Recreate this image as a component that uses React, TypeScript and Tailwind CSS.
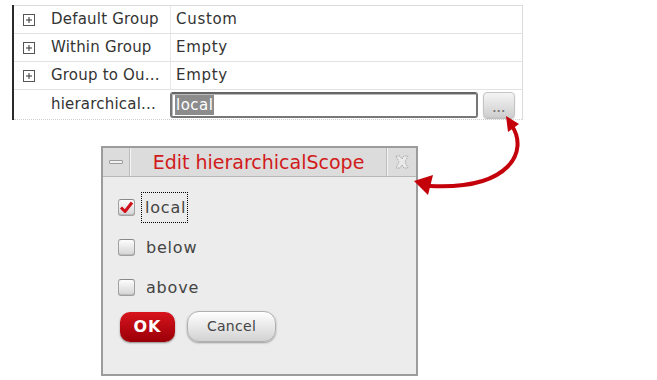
import React from "react";

const font = { fontFamily: '"DejaVu Sans", "Noto Sans", sans-serif' };

function PlusBox() {
  return (
    <svg width="12" height="12" viewBox="0 0 12 12" className="shrink-0">
      <rect x="0.5" y="0.5" width="11" height="11" fill="#fff" stroke="#555" />
      <path d="M3 6h6M6 3v6" stroke="#333" strokeWidth="1" />
    </svg>
  );
}

function Row({ label, value, plus = true }: { label: string; value: string; plus?: boolean }) {
  return (
    <div className="flex h-[28px] border-b border-[#e2e2e2]">
      <div className="flex w-[156px] items-center">
        <div className="flex w-[37px] justify-start pl-[9px]">{plus ? <PlusBox /> : null}</div>
        <span className="text-[15px] tracking-[0.2px] text-[#333]">{label}</span>
      </div>
      <div className="flex flex-1 items-center border-l border-[#e8e8e8]">
        <span className="pl-[5px] text-[15px] tracking-[0.7px] text-[#333]">{value}</span>
      </div>
    </div>
  );
}

function Checkbox({ checked }: { checked?: boolean }) {
  return (
    <div className="relative h-[17px] w-[17px] rounded-[3px] border border-[#a0a0a0] border-t-[#888] bg-gradient-to-b from-[#fdfdfd] to-[#d4d4d4] shadow-[inset_0_-1px_0_#bbb]">
      {checked ? (
        <svg width="17" height="17" viewBox="0 0 17 17" className="absolute left-[-1px] top-[-1px]">
          <path d="M3 8.5 L7 12.5 L14 3.5" fill="none" stroke="#d0101a" strokeWidth="3" strokeLinejoin="round" />
        </svg>
      ) : null}
    </div>
  );
}

export default function App() {
  return (
    <div className="relative h-[380px] w-[657px] overflow-hidden bg-white" style={font}>
      {/* property table */}
      <div className="ml-[12px] mt-[5px] w-[511px] border-l-2 border-[#2a2a2a]">
        <div className="border-t border-r border-[#dcdcdc]">
          <Row label="Default Group" value="Custom" />
          <Row label="Within Group" value="Empty" />
          <Row label="Group to Ou..." value="Empty" />
          <div className="flex h-[30px] border-b border-dotted border-[#cfcfcf]">
            <div className="flex w-[156px] items-center">
              <div className="w-[37px]" />
              <span className="text-[15px] tracking-[0.2px] text-[#333]">hierarchical...</span>
            </div>
            <div className="flex flex-1 items-center gap-[5px]">
              <div className="flex h-[26px] w-[308px] items-center rounded-[3px] border-2 border-[#777] border-t-[#666] bg-white pl-[3px] shadow-[inset_1px_1px_0_#bbb]">
                <span className="bg-[#8c8c8c] px-[1px] text-[15px] leading-[20px] tracking-[0.5px] text-white">local</span>
              </div>
              <div className="flex h-[26px] w-[32px] items-end justify-center rounded-[4px] border border-[#c4c4c4] bg-gradient-to-b from-[#f4f4f4] to-[#cfcfcf] pb-[3px] shadow-[0_1px_1px_#bbb]">
                <span className="text-[10px] font-bold leading-[10px] tracking-[0.5px] text-[#777]">...</span>
              </div>
            </div>
          </div>
        </div>
      </div>

      {/* dialog */}
      <div className="ml-[101px] mt-[26px] flex h-[230px] w-[317px] flex-col border-2 border-[#9c9c9c] bg-[#ececec]">
        <div className="flex h-[29px] border-b border-[#b8b8b8] bg-[#dcdcdc]">
          <div className="flex w-[27px] items-center justify-center border-r border-[#bcbcbc] shadow-[1px_0_0_#f4f4f4]">
            <div className="h-[4px] w-[14px] rounded-[1px] border border-[#9a9a9a] bg-[#f2f2f2]" />
          </div>
          <div className="flex flex-1 items-center justify-center text-[19px] text-[#d11a1a]">
            Edit hierarchicalScope
          </div>
          <div className="flex w-[29px] items-center justify-center border-l border-[#f4f4f4] shadow-[-1px_0_0_#bcbcbc]">
            <svg width="16" height="16" viewBox="0 0 16 16">
              <path d="M2 2 L6 2 L8 5 L10 2 L14 2 L11 8 L14 14 L10 14 L8 11 L6 14 L2 14 L5 8 Z" fill="#eaeaea" stroke="#a8a8a8" strokeWidth="1" strokeDasharray="1.5 1" />
            </svg>
          </div>
        </div>
        <div className="flex flex-1 flex-col pl-[15px]">
          <div className="mt-[15px] flex h-[31px] items-center">
            <Checkbox checked />
            <div className="ml-[6px] flex h-[31px] w-[47px] items-center border border-dotted border-black pl-[3px] text-[16px] tracking-[0.8px] text-[#444]">
              local
            </div>
          </div>
          <div className="mt-[9px] flex h-[31px] items-center">
            <Checkbox />
            <span className="ml-[11px] text-[16px] tracking-[0.8px] text-[#444]">below</span>
          </div>
          <div className="mt-[9px] flex h-[31px] items-center">
            <Checkbox />
            <span className="ml-[11px] text-[16px] tracking-[0.8px] text-[#444]">above</span>
          </div>
          <div className="ml-[2px] mt-[8px] flex items-center gap-[12px]">
            <div className="flex h-[30px] w-[55px] items-center justify-center rounded-[10px] bg-gradient-to-b from-[#d8141c] to-[#9a0008] shadow-[0_1px_2px_#888]">
              <span className="text-[16px] font-bold tracking-[1px] text-white">OK</span>
            </div>
            <div className="flex h-[31px] w-[89px] items-center justify-center rounded-[12px] border border-[#b0b0b0] bg-gradient-to-b from-[#ffffff] to-[#d2d2d2] shadow-[0_1px_2px_#999]">
              <span className="text-[14px] tracking-[0.3px] text-[#444]">Cancel</span>
            </div>
          </div>
        </div>
      </div>

      {/* red arrow connecting button and dialog */}
      <svg className="pointer-events-none absolute left-0 top-0" width="657" height="380" viewBox="0 0 657 380">
        <path d="M512 126 C 528 150, 512 190, 430 186" fill="none" stroke="#c4000a" strokeWidth="4" strokeLinecap="round" />
        <path d="M506 116 L519 124 L508 132 Z" fill="#c4000a" />
        <path d="M414 181 L433 175 L428 195 Z" fill="#c4000a" />
      </svg>
    </div>
  );
}
